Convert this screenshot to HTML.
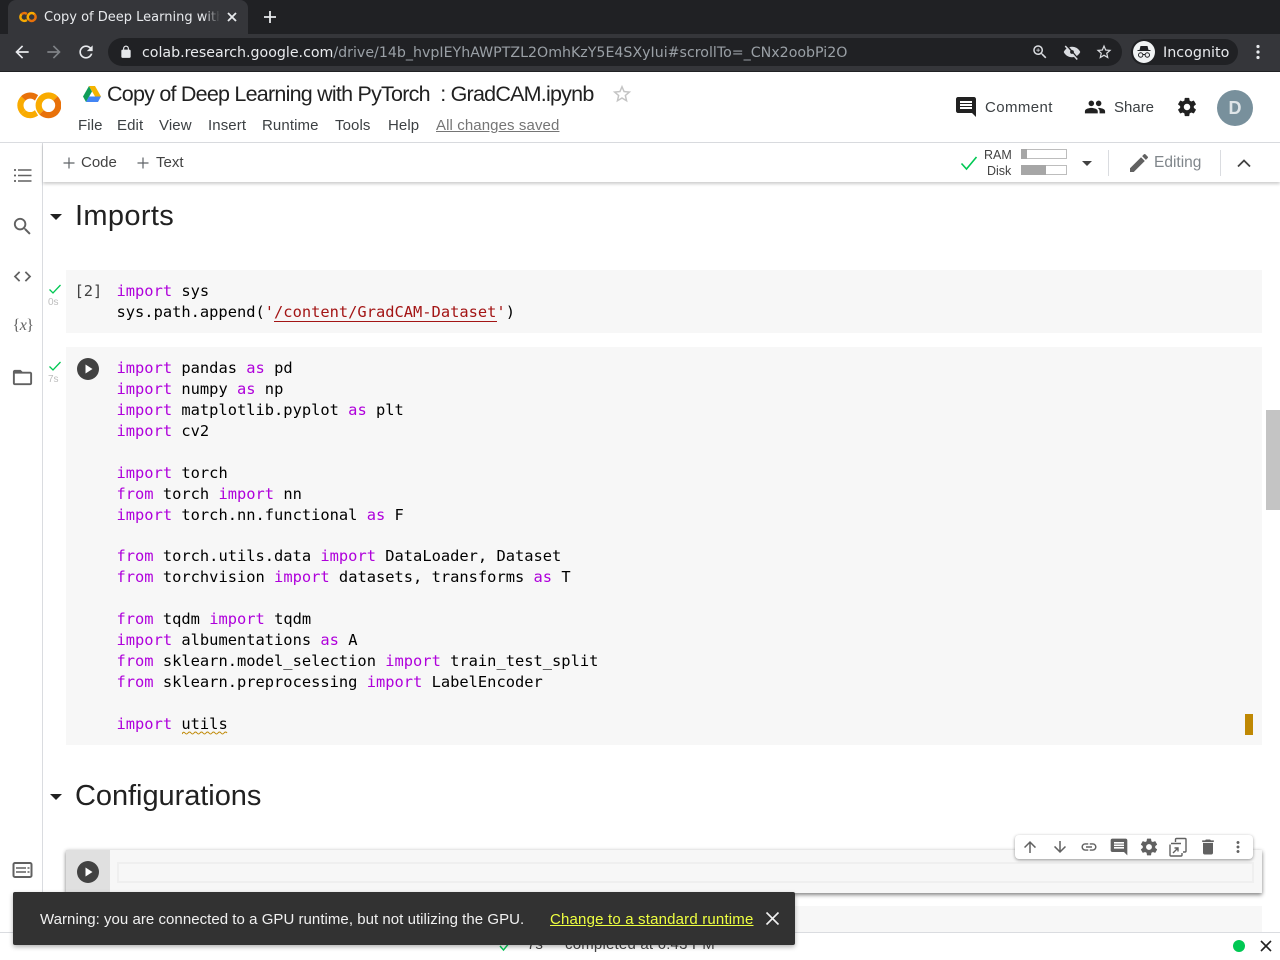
<!DOCTYPE html>
<html><head><meta charset="utf-8"><style>
html,body{margin:0;padding:0;width:1280px;height:960px;overflow:hidden;background:#fff;font-family:"Liberation Sans",sans-serif}
.a{position:absolute}
.t{position:absolute;white-space:pre}
svg{position:absolute;display:block}
.d{font-family:"DejaVu Sans",sans-serif}
.c{position:absolute;left:116.500px;font:15.4px/21px "DejaVu Sans Mono",monospace;color:#000;white-space:pre}
.c b{font-weight:normal;color:#af00db}
.c i{font-style:normal;color:#a31515}
.m{font-size:15px;line-height:20px;color:#3c4043;top:116px;letter-spacing:.1px}
</style></head><body>
<!-- chrome -->
<div class="a" style="left:0;top:0;width:1280px;height:34px;background:#202124"></div>
<div class="a" style="left:8px;top:0;width:240px;height:34px;background:#35363a;border-radius:8px 8px 0 0"></div>
<div class="a" style="left:0;top:34px;width:1280px;height:37px;background:#35363a"></div>
<div class="a" style="left:0;top:71px;width:1280px;height:1px;background:#202124"></div>
<svg style="left:19px;top:8px" width="18" height="18" viewBox="0 0 24 24"><path fill="#F9AB00" d="M4.54 9.46 2.19 7.1a6.93 6.93 0 0 0 0 9.79l2.36-2.36a3.59 3.59 0 0 1 0-5.07z"/><path fill="#E8710A" d="M2.19 7.1l2.35 2.36a3.59 3.59 0 0 1 5.08 0l1.71-2.93-.1-.08A6.93 6.93 0 0 0 2.19 7.1z"/><path fill="#F9AB00" d="M11.34 17.46 9.62 14.54a3.59 3.59 0 0 1-5.08 0L2.19 16.9a6.93 6.93 0 0 0 9 .65z"/><path fill="#F9AB00" d="M12 7.1a6.93 6.93 0 0 0 0 9.79l2.36-2.36a3.59 3.59 0 1 1 5.08-5.08L21.81 7.1A6.93 6.93 0 0 0 12 7.1z"/><path fill="#E8710A" d="M21.81 7.1l-2.35 2.36a3.59 3.59 0 0 1-5.08 5.08L12 16.9A6.93 6.93 0 0 0 21.81 7.1z"/></svg>
<div class="t d" style="left:44px;top:9px;width:176px;overflow:hidden;font-size:13px;line-height:18px;color:#e8eaed">Copy of Deep Learning with PyTorch</div>
<div class="a" style="left:204px;top:6px;width:16px;height:22px;background:linear-gradient(90deg,rgba(53,54,58,0),#35363a)"></div>
<svg style="left:226px;top:11px" width="12" height="12" viewBox="0 0 12 12"><path d="M2 2l8 8M10 2l-8 8" stroke="#e8eaed" stroke-width="1.8"/></svg>
<svg style="left:263px;top:10px" width="14" height="14" viewBox="0 0 14 14"><path d="M7 1v12M1 7h12" stroke="#e8eaed" stroke-width="1.8"/></svg>
<svg style="left:12px;top:42px" width="20" height="20" viewBox="0 0 24 24"><path fill="#e8eaed" d="M20 11H7.83l5.59-5.59L12 4l-8 8 8 8 1.41-1.41L7.83 13H20v-2z"/></svg>
<svg style="left:44px;top:42px" width="20" height="20" viewBox="0 0 24 24"><path fill="#7f8286" d="M12 4l-1.41 1.41L16.17 11H4v2h12.17l-5.58 5.59L12 20l8-8z"/></svg>
<svg style="left:76px;top:42px" width="20" height="20" viewBox="0 0 24 24"><path fill="#e8eaed" d="M17.65 6.35C16.2 4.9 14.21 4 12 4c-4.42 0-7.99 3.58-7.99 8s3.57 8 7.99 8c3.73 0 6.84-2.55 7.73-6h-2.08c-.82 2.33-3.04 4-5.65 4-3.31 0-6-2.69-6-6s2.69-6 6-6c1.66 0 3.14.69 4.22 1.78L13 11h7V4l-2.35 2.35z"/></svg>
<div class="a" style="left:108px;top:38px;width:1014px;height:28px;background:#202124;border-radius:14px"></div>
<svg style="left:119px;top:45px" width="14" height="14" viewBox="0 0 24 24"><path fill="#e8eaed" d="M18 8h-1V6c0-2.76-2.24-5-5-5S7 3.24 7 6v2H6c-1.1 0-2 .9-2 2v10c0 1.1.9 2 2 2h12c1.1 0 2-.9 2-2V10c0-1.1-.9-2-2-2zm-2.9 0H8.9V6c0-1.71 1.39-3.1 3.1-3.1 1.71 0 3.1 1.39 3.1 3.1v2z"/></svg>
<div class="t d" style="left:142px;top:44px;font-size:14.2px;line-height:18px;color:#9aa0a6"><span style="color:#e8eaed">colab.research.google.com</span>/drive/14b_hvpIEYhAWPTZL2OmhKzY5E4SXyIui#scrollTo=_CNx2oobPi2O</div>
<svg style="left:1031px;top:43px" width="18" height="18" viewBox="0 0 24 24"><path fill="#dadce0" d="M15.5 14h-.79l-.28-.27C15.41 12.59 16 11.11 16 9.5 16 5.91 13.09 3 9.5 3S3 5.91 3 9.5 5.91 16 9.5 16c1.61 0 3.09-.59 4.23-1.57l.27.28v.79l5 4.99L20.49 19l-4.99-5zm-6 0C7.01 14 5 11.99 5 9.5S7.01 5 9.5 5 14 7.01 14 9.5 11.99 14 9.5 14z"/><path fill="#dadce0" d="M12 10h-2v2H9v-2H7V9h2V7h1v2h2v1z"/></svg>
<svg style="left:1063px;top:43px" width="18" height="18" viewBox="0 0 24 24"><path fill="#dadce0" d="M12 5C7 5 2.7 8.100 1 12c1.700 3.900 6 7 11 7s9.300-3.100 11-7c-1.700-3.900-6-7-11-7z"/><path stroke="#202124" stroke-width="2" d="M5 3l15 18"/><path stroke="#dadce0" stroke-width="2" d="M3 4l16 18"/><circle cx="12" cy="12" r="2.500" fill="#202124"/></svg>
<svg style="left:1095px;top:43px" width="18" height="18" viewBox="0 0 24 24"><path fill="#dadce0" d="M22 9.24l-7.19-.62L12 2 9.19 8.63 2 9.24l5.46 4.73L5.82 21 12 17.27 18.18 21l-1.63-7.03L22 9.24zM12 15.4l-3.76 2.27 1-4.28-3.32-2.88 4.38-.38L12 6.1l1.71 4.04 4.38.38-3.32 2.88 1 4.28L12 15.4z"/></svg>
<div class="a" style="left:1131px;top:39px;width:107px;height:26px;background:#202124;border-radius:13px"></div>
<div class="a" style="left:1133px;top:41px;width:22px;height:22px;background:#f1f3f4;border-radius:50%"></div>
<svg style="left:1135px;top:43px" width="18" height="18" viewBox="0 0 18 18"><path fill="#202124" d="M5.500 3h7l1 4h2v1h-13V7h2z"/><circle cx="5.700" cy="12" r="2.200" fill="none" stroke="#202124" stroke-width="1"/><circle cx="12.300" cy="12" r="2.200" fill="none" stroke="#202124" stroke-width="1"/><path stroke="#202124" d="M8 11.500h2"/></svg>
<div class="t d" style="left:1163px;top:44px;font-size:14.3px;line-height:18px;color:#e8eaed">Incognito</div>
<svg style="left:1249px;top:43px" width="18" height="18" viewBox="0 0 18 18"><circle cx="9" cy="3.500" r="1.600" fill="#e8eaed"/><circle cx="9" cy="9" r="1.600" fill="#e8eaed"/><circle cx="9" cy="14.500" r="1.600" fill="#e8eaed"/></svg>

<!-- header -->
<svg style="left:16.600px;top:82.700px" width="44.700" height="44.700" viewBox="0 0 24 24"><path fill="#F9AB00" d="M4.54 9.46 2.19 7.1a6.93 6.93 0 0 0 0 9.79l2.36-2.36a3.59 3.59 0 0 1 0-5.07z"/><path fill="#E8710A" d="M2.19 7.1l2.35 2.36a3.59 3.59 0 0 1 5.08 0l1.71-2.93-.1-.08A6.93 6.93 0 0 0 2.19 7.1z"/><path fill="#F9AB00" d="M11.34 17.46 9.62 14.54a3.59 3.59 0 0 1-5.08 0L2.19 16.9a6.93 6.93 0 0 0 9 .65z"/><path fill="#F9AB00" d="M12 7.1a6.93 6.93 0 0 0 0 9.79l2.36-2.36a3.59 3.59 0 1 1 5.08-5.08L21.81 7.1A6.93 6.93 0 0 0 12 7.1z"/><path fill="#E8710A" d="M21.81 7.1l-2.35 2.36a3.59 3.59 0 0 1-5.08 5.08L12 16.9A6.93 6.93 0 0 0 21.81 7.1z"/></svg>
<svg style="left:83px;top:86px" width="18" height="16" viewBox="0 0 18 16"><path fill="#0f9d58" d="M6 0 0 10.500 3 16l6-10.500z"/><path fill="#f4b400" d="M6 0h6l6 10.500h-6z"/><path fill="#4285f4" d="M3 16h12l3-5.500H6z"/></svg>
<div class="t" style="left:107px;top:81px;font-size:21.500px;line-height:26px;letter-spacing:-.77px;color:#212121">Copy of Deep Learning with PyTorch  : GradCAM.ipynb</div>
<svg style="left:611px;top:83px" width="22" height="22" viewBox="0 0 24 24"><path fill="#c4c4c4" d="M22 9.24l-7.19-.62L12 2 9.19 8.63 2 9.24l5.46 4.73L5.82 21 12 17.27 18.18 21l-1.63-7.03L22 9.24zM12 15.4l-3.76 2.27 1-4.28-3.32-2.88 4.38-.38L12 6.100l1.710 4.040 4.380.380-3.320 2.880 1 4.280L12 15.400z"/></svg>
<div class="t m" style="left:78px">File</div>
<div class="t m" style="left:117px">Edit</div>
<div class="t m" style="left:159px">View</div>
<div class="t m" style="left:208px">Insert</div>
<div class="t m" style="left:262px">Runtime</div>
<div class="t m" style="left:335px">Tools</div>
<div class="t m" style="left:388px">Help</div>
<div class="t m" style="left:436px;color:#757575;text-decoration:underline">All changes saved</div>
<svg style="left:954px;top:95px" width="24" height="24" viewBox="0 0 24 24"><path fill="#212121" d="M21.990 4c0-1.100-.890-2-1.990-2H4c-1.100 0-2 .9-2 2v12c0 1.100.9 2 2 2h14l4 4-.010-18zM18 14H6v-2h12v2zm0-3H6V9h12v2zm0-3H6V6h12v2z"/></svg>
<div class="t" style="left:985px;top:98px;font-size:15px;line-height:20px;letter-spacing:.4px;color:#3c4043">Comment</div>
<svg style="left:1084px;top:96px" width="22" height="22" viewBox="0 0 24 24"><path fill="#212121" d="M16 11c1.660 0 2.990-1.340 2.990-3S17.660 5 16 5c-1.660 0-3 1.340-3 3s1.340 3 3 3zm-8 0c1.660 0 2.990-1.340 2.990-3S9.660 5 8 5C6.340 5 5 6.340 5 8s1.340 3 3 3zm0 2c-2.330 0-7 1.170-7 3.500V19h14v-2.500c0-2.330-4.670-3.500-7-3.500zm8 0c-.290 0-.620.020-.970.050 1.160.840 1.970 1.970 1.970 3.450V19h6v-2.500c0-2.330-4.670-3.500-7-3.500z"/></svg>
<div class="t" style="left:1114px;top:98px;font-size:15px;line-height:20px;color:#3c4043">Share</div>
<svg style="left:1176px;top:96px" width="22" height="22" viewBox="0 0 24 24"><path fill="#212121" d="M19.430 12.980c.040-.320.070-.640.070-.980s-.030-.660-.070-.980l2.110-1.650c.190-.150.240-.420.120-.640l-2-3.460c-.120-.220-.390-.300-.610-.220l-2.490 1c-.520-.400-1.080-.730-1.690-.980l-.380-2.650C14.460 2.180 14.250 2 14 2h-4c-.250 0-.460.180-.490.420l-.380 2.650c-.610.250-1.170.590-1.690.980l-2.490-1c-.230-.090-.490 0-.610.220l-2 3.460c-.130.220-.070.490.120.640l2.110 1.650c-.040.320-.070.650-.070.980s.030.660.070.980l-2.110 1.650c-.190.150-.240.420-.120.640l2 3.460c.120.220.390.300.610.220l2.490-1c.520.400 1.080.730 1.690.980l.380 2.650c.030.240.240.420.490.420h4c.250 0 .460-.180.490-.42l.380-2.650c.610-.250 1.170-.590 1.690-.980l2.490 1c.230.090.490 0 .610-.220l2-3.460c.120-.220.070-.490-.120-.640l-2.110-1.650zM12 15.500c-1.930 0-3.500-1.570-3.500-3.500s1.570-3.500 3.500-3.500 3.500 1.570 3.500 3.500-1.570 3.500-3.500 3.500z"/></svg>
<div class="a" style="left:1217px;top:90px;width:36px;height:36px;border-radius:50%;background:#78909c;color:#dfe5e8;font-size:18px;font-weight:bold;line-height:37px;text-align:center">D</div>
<div class="a" style="left:0;top:142px;width:1280px;height:1px;background:#dadce0"></div>

<!-- sidebar -->
<div class="a" style="left:42px;top:143px;width:1px;height:789px;background:#dadce0"></div>
<svg style="left:14px;top:168px" width="18" height="15" viewBox="0 0 18 15"><path stroke="#616161" stroke-width="1.400" d="M4 2h13.500M4 7.500h13.500M4 13h13.500"/><path stroke="#616161" stroke-width="1.800" d="M0 2h2M0 7.500h2M0 13h2"/></svg>
<svg style="left:11px;top:215px" width="23" height="23" viewBox="0 0 24 24"><path fill="#616161" d="M15.500 14h-.790l-.280-.270C15.410 12.590 16 11.110 16 9.500 16 5.910 13.090 3 9.500 3S3 5.910 3 9.500 5.910 16 9.500 16c1.610 0 3.090-.590 4.230-1.570l.270.280v.790l5 4.990L20.490 19l-4.990-5zm-6 0C7.010 14 5 11.990 5 9.500S7.010 5 9.500 5 14 7.010 14 9.500 11.990 14 9.500 14z"/></svg>
<svg style="left:12px;top:266px" width="21" height="21" viewBox="0 0 24 24"><path fill="#616161" d="M9.400 16.600L4.800 12l4.600-4.600L8 6l-6 6 6 6 1.400-1.400zm5.200 0l4.600-4.600-4.600-4.600L16 6l6 6-6 6-1.400-1.400z"/></svg>
<div class="t" style="left:12.500px;top:315px;font:16px/22px 'Liberation Serif',serif;letter-spacing:-.5px;color:#616161">{<span style="font-style:italic">x</span>}</div>
<svg style="left:11px;top:366px" width="23" height="23" viewBox="0 0 24 24"><path fill="#616161" d="M20 6h-8l-2-2H4c-1.100 0-1.990.9-1.990 2L2 18c0 1.100.9 2 2 2h16c1.100 0 2-.9 2-2V8c0-1.100-.9-2-2-2zm0 12H4V8h16v10z"/></svg>
<svg style="left:12px;top:861px" width="21" height="18" viewBox="0 0 21 18"><rect x="1.500" y="2" width="18" height="14" rx="1.500" fill="none" stroke="#616161" stroke-width="2"/><path stroke="#616161" stroke-width="1.500" d="M4 7h10M15.500 7h2M4 11h10M15.500 11h2"/></svg>

<!-- content -->
<div class="t" style="left:75px;top:198px;font-size:29px;line-height:36px;letter-spacing:.35px;color:#212121">Imports</div>
<div class="a" style="left:50px;top:214px;width:0;height:0;border-left:6px solid transparent;border-right:6px solid transparent;border-top:6px solid #212121"></div>
<div class="a" style="left:66px;top:270px;width:1196px;height:63px;background:#f7f7f7"></div>
<div class="a" style="left:66px;top:347px;width:1196px;height:398px;background:#f7f7f7"></div>
<svg style="left:48px;top:283px" width="14" height="12" viewBox="0 0 14 12"><path d="M1.500 6.500l3.500 3.500 7.500-8" fill="none" stroke="#00c853" stroke-width="1.300"/></svg>
<div class="t" style="left:48px;top:297px;font-size:10px;line-height:11px;color:#bdbdbd">0s</div>
<svg style="left:48px;top:360px" width="14" height="12" viewBox="0 0 14 12"><path d="M1.500 6.500l3.500 3.500 7.500-8" fill="none" stroke="#00c853" stroke-width="1.300"/></svg>
<div class="t" style="left:48px;top:374px;font-size:10px;line-height:11px;color:#bdbdbd">7s</div>
<div class="t" style="left:74.500px;top:281px;font:15.4px/21px 'DejaVu Sans Mono',monospace;color:#424242">[2]</div>
<div class="c" style="top:281px"><b>import</b> sys
sys.path.append(<i>'/content/GradCAM-Dataset'</i>)</div>
<div class="a" style="left:274px;top:321px;width:223px;height:1px;background:#a31515"></div>
<svg style="left:77px;top:358px" width="22" height="22" viewBox="0 0 22 22"><circle cx="11" cy="11" r="11" fill="#424242"/><path d="M8.500 6.500l7 4.500-7 4.500z" fill="#fff"/></svg>
<div class="c" style="top:358px;line-height:20.94px"><b>import</b> pandas <b>as</b> pd
<b>import</b> numpy <b>as</b> np
<b>import</b> matplotlib.pyplot <b>as</b> plt
<b>import</b> cv2

<b>import</b> torch
<b>from</b> torch <b>import</b> nn
<b>import</b> torch.nn.functional <b>as</b> F

<b>from</b> torch.utils.data <b>import</b> DataLoader, Dataset
<b>from</b> torchvision <b>import</b> datasets, transforms <b>as</b> T

<b>from</b> tqdm <b>import</b> tqdm
<b>import</b> albumentations <b>as</b> A
<b>from</b> sklearn.model_selection <b>import</b> train_test_split
<b>from</b> sklearn.preprocessing <b>import</b> LabelEncoder

<b>import</b> utils</div>
<svg style="left:182px;top:731px" width="46" height="4" viewBox="0 0 46 4"><path d="M0 3 Q1.500 0 3 2 T6 2 T9 2 T12 2 T15 2 T18 2 T21 2 T24 2 T27 2 T30 2 T33 2 T36 2 T39 2 T42 2 T45 2" fill="none" stroke="#bf8803" stroke-width="1"/></svg>
<div class="a" style="left:1245px;top:714px;width:8px;height:21px;background:#bf8803"></div>
<div class="t" style="left:75px;top:778px;font-size:29px;line-height:36px;letter-spacing:-.05px;color:#212121">Configurations</div>
<div class="a" style="left:50px;top:794px;width:0;height:0;border-left:6px solid transparent;border-right:6px solid transparent;border-top:6px solid #212121"></div>

<div class="a" style="left:66px;top:850px;width:1196px;height:43px;background:#f7f7f7;box-shadow:0 2px 4px rgba(0,0,0,.45),0 0 4px rgba(0,0,0,.1)"></div>
<div class="a" style="left:66px;top:850px;width:44px;height:43px;background:#e0e0e0"></div>
<svg style="left:77px;top:861px" width="22" height="22" viewBox="0 0 22 22"><circle cx="11" cy="11" r="11" fill="#424242"/><path d="M8.500 6.500l7 4.500-7 4.500z" fill="#fff"/></svg>
<div class="a" style="left:117px;top:862px;width:1133px;height:17px;border:2px solid #efefef"></div>
<div class="a" style="left:66px;top:906px;width:1196px;height:26px;background:#f7f7f7"></div>

<!-- cell toolbar -->
<div class="a" style="left:1015px;top:835px;width:238px;height:24px;background:#fff;border-radius:4px;box-shadow:0 1px 3px rgba(0,0,0,.4)"></div>
<svg style="left:1021px;top:838px" width="18" height="18" viewBox="0 0 24 24"><path fill="#616161" d="M4 12l1.410 1.410L11 7.830V20h2V7.830l5.580 5.590L20 12l-8-8-8 8z"/></svg>
<svg style="left:1051px;top:838px" width="18" height="18" viewBox="0 0 24 24"><path fill="#616161" d="M20 12l-1.410-1.410L13 16.170V4h-2v12.170l-5.580-5.590L4 12l8 8 8-8z"/></svg>
<svg style="left:1080px;top:838px" width="18" height="18" viewBox="0 0 24 24"><path fill="#616161" d="M3.900 12c0-1.710 1.390-3.100 3.100-3.100h4V7H7c-2.760 0-5 2.240-5 5s2.240 5 5 5h4v-1.900H7c-1.710 0-3.100-1.390-3.100-3.100zM8 13h8v-2H8v2zm9-6h-4v1.900h4c1.710 0 3.100 1.390 3.100 3.100s-1.390 3.100-3.100 3.100h-4V17h4c2.760 0 5-2.240 5-5s-2.240-5-5-5z"/></svg>
<svg style="left:1109px;top:837px" width="20" height="20" viewBox="0 0 24 24"><path fill="#616161" d="M21.990 4c0-1.100-.890-2-1.990-2H4c-1.100 0-2 .9-2 2v12c0 1.100.9 2 2 2h14l4 4-.010-18zM18 14H6v-2h12v2zm0-3H6V9h12v2zm0-3H6V6h12v2z"/></svg>
<svg style="left:1139px;top:837px" width="20" height="20" viewBox="0 0 24 24"><path fill="#616161" d="M19.430 12.980c.040-.320.070-.640.070-.980s-.030-.660-.070-.980l2.110-1.650c.190-.150.240-.420.120-.640l-2-3.460c-.120-.220-.390-.300-.610-.220l-2.490 1c-.520-.400-1.080-.730-1.690-.980l-.380-2.650C14.460 2.180 14.250 2 14 2h-4c-.250 0-.460.180-.490.420l-.380 2.650c-.610.250-1.170.590-1.690.980l-2.490-1c-.230-.090-.490 0-.610.220l-2 3.460c-.130.220-.070.490.120.640l2.110 1.650c-.040.320-.070.650-.070.980s.030.660.070.980l-2.110 1.650c-.190.150-.240.420-.120.640l2 3.460c.120.220.390.300.610.220l2.490-1c.520.400 1.080.730 1.690.980l.380 2.650c.030.240.240.420.490.420h4c.250 0 .460-.180.490-.42l.380-2.650c.610-.250 1.170-.590 1.690-.980l2.490 1c.230.090.490 0 .610-.220l2-3.460c.120-.220.070-.490-.120-.640l-2.110-1.650zM12 15.500c-1.930 0-3.500-1.570-3.500-3.500s1.570-3.500 3.500-3.500 3.500 1.570 3.500 3.500-1.570 3.500-3.500 3.500z"/></svg>
<svg style="left:1169px;top:837px" width="18" height="20" viewBox="0 0 18 20"><path d="M6.500 5V2.500a1 1 0 0 1 1-1H16a1 1 0 0 1 1 1V14a1 1 0 0 1-1 1h-2M2 6.500h10M1 7.500V18a1 1 0 0 0 1 1h10a1 1 0 0 0 1-1v-2" fill="none" stroke="#616161" stroke-width="1.400"/><path d="M4 16l5-5M5.500 11H9v3.500" fill="none" stroke="#616161" stroke-width="1.400"/></svg>
<svg style="left:1198px;top:837px" width="20" height="20" viewBox="0 0 24 24"><path fill="#616161" d="M6 19c0 1.100.9 2 2 2h8c1.100 0 2-.9 2-2V7H6v12zM19 4h-3.500l-1-1h-5l-1 1H5v2h14V4z"/></svg>
<svg style="left:1229px;top:838px" width="18" height="18" viewBox="0 0 24 24"><path fill="#616161" d="M12 8c1.100 0 2-.9 2-2s-.9-2-2-2-2 .9-2 2 .9 2 2 2zm0 2c-1.100 0-2 .9-2 2s.9 2 2 2 2-.9 2-2-.9-2-2-2zm0 6c-1.100 0-2 .9-2 2s.9 2 2 2 2-.9 2-2-.9-2-2-2z"/></svg>

<!-- scrollbar -->
<div class="a" style="left:1266px;top:183px;width:14px;height:749px;background:#fff"></div>
<div class="a" style="left:1266px;top:410px;width:14px;height:100px;background:#c4c4c4"></div>

<!-- toolbar row -->
<div class="a" style="left:43px;top:143px;width:1237px;height:39px;background:#fff;box-shadow:0 2px 3px rgba(0,0,0,.2)"></div>
<svg style="left:62px;top:156px" width="14" height="14" viewBox="0 0 14 14"><path d="M7 1.500v11M1.500 7h11" stroke="#5f6368" stroke-width="1.200"/></svg>
<div class="t" style="left:81px;top:153px;font-size:15px;line-height:20px;color:#424242">Code</div>
<svg style="left:136px;top:156px" width="14" height="14" viewBox="0 0 14 14"><path d="M7 1.500v11M1.500 7h11" stroke="#5f6368" stroke-width="1.200"/></svg>
<div class="t" style="left:156px;top:153px;font-size:15px;line-height:20px;color:#424242">Text</div>
<svg style="left:960px;top:155px" width="18" height="16" viewBox="0 0 18 16"><path d="M1.500 8.500l5 5.500 10-12" fill="none" stroke="#00c853" stroke-width="1.600"/></svg>
<div class="t" style="left:984px;top:147px;font-size:12.500px;line-height:16px;color:#424242">RAM</div>
<div class="t" style="left:987px;top:163px;font-size:12.500px;line-height:16px;color:#424242">Disk</div>
<div class="a" style="left:1021px;top:149px;width:44px;height:8px;border:1px solid #bdbdbd"></div>
<div class="a" style="left:1021px;top:149px;width:6px;height:10px;background:#a6a6a6"></div>
<div class="a" style="left:1021px;top:165px;width:44px;height:8px;border:1px solid #bdbdbd"></div>
<div class="a" style="left:1021px;top:165px;width:25px;height:10px;background:#a6a6a6"></div>
<div class="a" style="left:1082px;top:161px;width:0;height:0;border-left:5px solid transparent;border-right:5px solid transparent;border-top:5px solid #424242"></div>
<div class="a" style="left:1108px;top:150px;width:1px;height:26px;background:#dadce0"></div>
<svg style="left:1127px;top:151px" width="24" height="24" viewBox="0 0 24 24"><path fill="#616161" d="M3 17.250V21h3.750L17.810 9.940l-3.750-3.750L3 17.250zM20.710 7.040c.390-.390.390-1.020 0-1.410l-2.340-2.340c-.390-.390-1.020-.390-1.410 0l-1.830 1.830 3.750 3.750 1.830-1.830z"/></svg>
<div class="t" style="left:1154px;top:153px;font-size:15.500px;line-height:20px;color:#80868b">Editing</div>
<div class="a" style="left:1220px;top:150px;width:1px;height:26px;background:#dadce0"></div>
<svg style="left:1236px;top:157px" width="16" height="12" viewBox="0 0 16 12"><path d="M2 9.500l6-6 6 6" fill="none" stroke="#424242" stroke-width="1.800"/></svg>

<!-- status bar -->
<div class="a" style="left:0;top:932px;width:1280px;height:28px;background:#fff;border-top:1px solid #dadce0;box-sizing:border-box"></div>
<svg style="left:499px;top:940px" width="12" height="12" viewBox="0 0 12 12"><path d="M1 6l3.500 4 6.500-8" fill="none" stroke="#00c853" stroke-width="1.400"/></svg>
<div class="t" style="left:527px;top:935px;font-size:15px;line-height:20px;color:#424242">7s</div>
<div class="t" style="left:565px;top:935px;font-size:15px;line-height:20px;letter-spacing:.2px;color:#424242">completed at 6:43 PM</div>
<div class="a" style="left:1233px;top:940px;width:12px;height:12px;border-radius:50%;background:#00c853"></div>
<svg style="left:1260px;top:940px" width="12" height="12" viewBox="0 0 12 12"><path d="M1 1l10 10M11 1L1 11" stroke="#212121" stroke-width="1.600"/></svg>

<!-- toast -->
<div class="a" style="left:13px;top:892px;width:782px;height:53px;background:#323232;border-radius:2px;box-shadow:0 2px 5px rgba(0,0,0,.3)"></div>
<div class="t" style="left:40px;top:910px;font-size:15px;line-height:20px;letter-spacing:.04px;color:#f1f1f1">Warning: you are connected to a GPU runtime, but not utilizing the GPU.</div>
<div class="t" style="left:550px;top:910px;font-size:15px;line-height:20px;letter-spacing:.18px;color:#eeff41;text-decoration:underline">Change to a standard runtime</div>
<svg style="left:765px;top:911px" width="15" height="15" viewBox="0 0 15 15"><path d="M1.500 1.500l12 12M13.500 1.500l-12 12" stroke="#f1f1f1" stroke-width="1.600"/></svg>
</body></html>
